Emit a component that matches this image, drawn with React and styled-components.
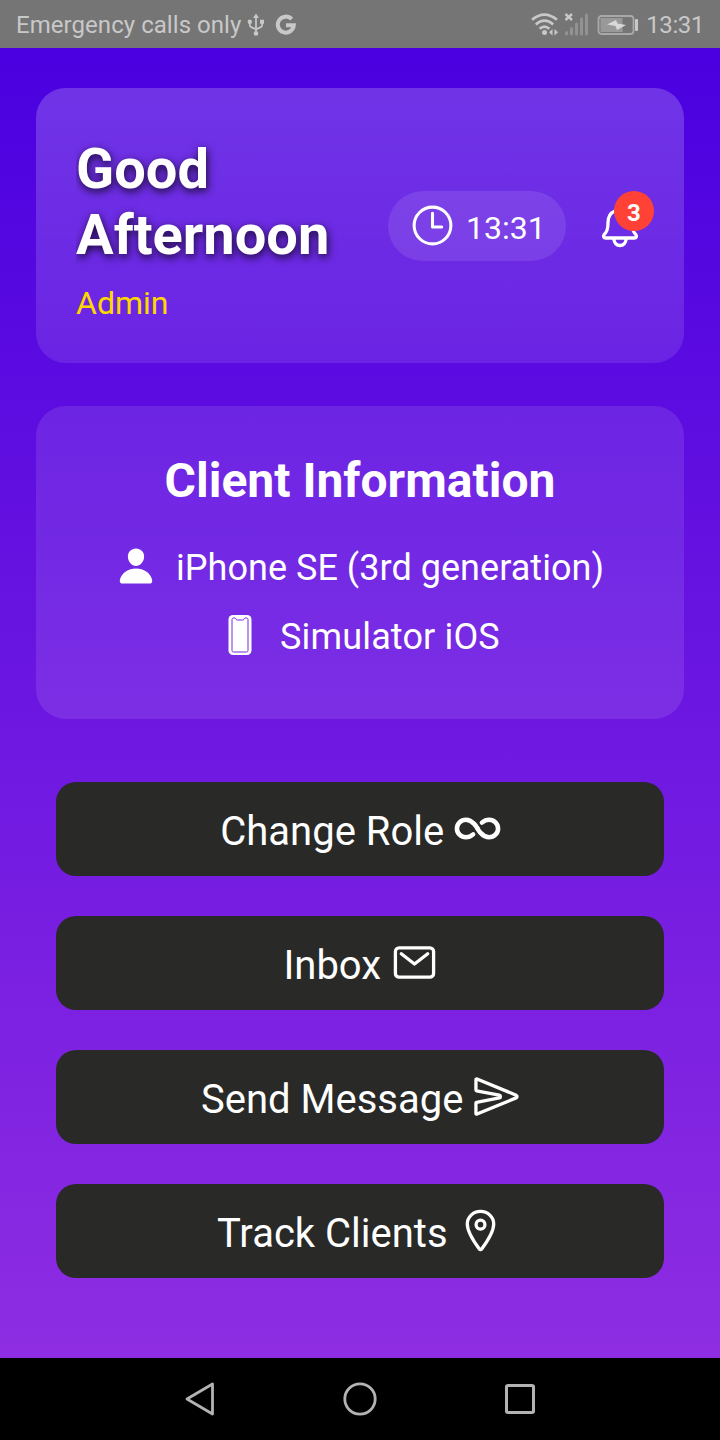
import React from "react";
import styled, { createGlobalStyle } from "styled-components";
import {
  IoTimeOutline,
  IoNotificationsOutline,
  IoPerson,
  IoMailOutline,
  IoSendOutline,
  IoLocationOutline,
} from "react-icons/io5";

const GlobalStyle = createGlobalStyle`
  * { box-sizing: border-box; }
  body {
    margin: 0;
    font-family: Roboto, "Liberation Sans", sans-serif;
    color: #fff;
  }
  svg { display: block; flex: none; }
`;

const Screen = styled.div`
  width: 720px;
  height: 1440px;
  display: flex;
  flex-direction: column;
  overflow: hidden;
`;

const StatusBar = styled.header`
  height: 48px;
  flex: none;
  padding: 2px 16px 0;
  display: flex;
  align-items: center;
  justify-content: space-between;
  background: #757575;
  color: #c8c8c8;
  font-size: 24px;
  white-space: nowrap;
`;

const StatusGroup = styled.div`
  display: flex;
  align-items: center;
  gap: ${(p) => p.$gap}px;
`;

const StatusText = styled.span`
  letter-spacing: ${(p) => p.$spacing}px;
`;

const Content = styled.main`
  flex: 1;
  padding: 40px 36px 0;
  display: flex;
  flex-direction: column;
  background: linear-gradient(#4a00e0, #8e2de2);
`;

const GreetingCard = styled.section`
  height: 275px;
  padding: 0 40px;
  display: flex;
  align-items: center;
  border-radius: 30px;
  background: linear-gradient(rgba(255, 255, 255, 0.2), rgba(255, 255, 255, 0.1));
`;

const Greeting = styled.div`
  width: 312px;
  flex: none;
  padding-top: 7px;
`;

const Title = styled.h1`
  margin: 0 0 16px;
  overflow: hidden;
  font-size: 56px;
  line-height: 66px;
  font-weight: 700;
  text-shadow: 1px 3px 9px rgba(0, 0, 0, 0.8);
`;

const Role = styled.div`
  font-size: 32px;
  line-height: 38px;
  color: #ffd700;
`;

const TimePill = styled.div`
  width: 178px;
  height: 70px;
  flex: none;
  padding-left: 20px;
  display: flex;
  align-items: center;
  gap: 9px;
  border-radius: 35px;
  background: rgba(255, 255, 255, 0.1);
  font-size: 32px;
  span { padding-top: 4px; }
`;

const BellButton = styled.div`
  position: relative;
  margin-left: 30px;
  svg * { stroke-width: 35px; }
`;

const Badge = styled.span`
  position: absolute;
  top: -11px;
  right: -10px;
  width: 40px;
  height: 40px;
  display: flex;
  align-items: center;
  justify-content: center;
  padding-top: 4px;
  border-radius: 50%;
  background: #ff4136;
  font-size: 24px;
  font-weight: 700;
`;

const ClientCard = styled.section`
  height: 313px;
  margin-top: 43px;
  padding-top: 47px;
  display: flex;
  flex-direction: column;
  align-items: center;
  border-radius: 30px;
  background: rgba(255, 255, 255, 0.1);
`;

const CardTitle = styled.h2`
  margin: 0 0 29px;
  font-size: 48px;
  line-height: 56px;
  font-weight: 700;
`;

const InfoRow = styled.div`
  height: 69px;
  display: flex;
  align-items: flex-start;
  gap: 20px;
  font-size: 36px;
  line-height: 60px;
  letter-spacing: ${(p) => p.$spacing}px;
  white-space: nowrap;
  svg { margin-top: 8px; }
`;

const Actions = styled.nav`
  margin-top: 63px;
  padding: 0 20px;
  display: flex;
  flex-direction: column;
  gap: 40px;
`;

const ActionButton = styled.button`
  height: 94px;
  padding: 4px 0 0 1px;
  display: flex;
  align-items: center;
  justify-content: center;
  gap: 9.5px;
  border: 0;
  border-radius: 20px;
  background: #292927;
  color: #fff;
  font: 400 40px Roboto, "Liberation Sans", sans-serif;
  svg { margin-top: -5px; }
  svg * { stroke-width: ${(p) => p.$stroke}px; }
`;

const NavBar = styled.footer`
  height: 82px;
  flex: none;
  display: flex;
  align-items: center;
  justify-content: center;
  gap: 124px;
  background: #000;
`;

const UsbIcon = () => (
  <svg width="18" height="24" viewBox="0 0 18 24" fill="none" stroke="currentColor" strokeWidth="1.7">
    <path d="M9 3v18M2.8 9v3.2c0 1 .5 1.5 1.4 1.9L9 16.2l4.8-2.1c.9-.4 1.4-.9 1.4-1.9V9" />
    <path d="M9 0.500l3 4.500H6zM13 6.700h4v4H13z" fill="currentColor" stroke="none" />
    <circle cx="2.800" cy="8.700" r="2.200" fill="currentColor" stroke="none" />
    <circle cx="9" cy="20.500" r="2.300" fill="currentColor" stroke="none" />
  </svg>
);

const GoogleIcon = () => (
  <svg width="22" height="22" viewBox="0 0 22 22" fill="none" stroke="currentColor" strokeWidth="4">
    <path d="M16.7 5.2A8 8 0 1 0 18.8 11.2H11" />
  </svg>
);

const WifiIcon = () => (
  <svg width="28" height="24" viewBox="0 0 28 24" fill="none" stroke="currentColor" strokeWidth="2.6">
    <path d="M1 6.8Q13.5-3.6 26 6.8M4.8 11.4Q13.5 4 22.2 11.4M8.6 15.8Q13.5 11.3 18.4 15.8" />
    <circle cx="13.5" cy="19.500" r="2.500" fill="currentColor" stroke="none" />
    <path d="M21.500 16v6.500l-3.500-3.200zM23.500 16v6.500l3.500-3.200z" fill="currentColor" stroke="none" />
  </svg>
);

const SignalIcon = () => (
  <svg width="24" height="24" viewBox="0 0 24 24">
    <path d="M1.500 1l6.500 6M8 1L1.500 7" stroke="currentColor" strokeWidth="2.400" />
    <path
      d="M2.500 19.500v1.500M7.500 15.500v5.500M12.500 11v10M17.500 6v15M22.500 2v19"
      stroke="#929292"
      strokeWidth="3"
      strokeLinecap="round"
    />
  </svg>
);

const BatteryIcon = () => (
  <svg width="42" height="20" viewBox="-1 0 42 20">
    <rect x="1.500" y="1" width="35" height="18" rx="3" fill="none" stroke="#a9a9a9" strokeWidth="1.800" />
    <rect x="3.500" y="3" width="22" height="14" fill="#999" />
    <path d="M10 9.500l9-4.500 1.500 3.500 8.500 1.500-9 5-1.500-4z" fill="#d8d8d8" />
    <rect x="38" y="4" width="3" height="12" rx="1" fill="#c8c8c8" />
  </svg>
);

const PhoneIcon = () => (
  <svg width="40" height="40" viewBox="0 0 40 40">
    <rect x="8.500" width="23" height="40" rx="4.500" fill="#fff" />
    <path
      d="M13.500 3H15c.8 0 .8 2 2.200 2h5.600c1.400 0 1.400-2 2.200-2h1.500c1 0 1.500.7 1.500 1.500v31c0 .8-.5 1.500-1.500 1.500h-13c-1 0-1.500-.7-1.500-1.500v-31c0-.8.5-1.500 1.500-1.500z"
      fill="none"
      stroke="#7629e3"
      strokeWidth="1"
    />
  </svg>
);

const InfinityIcon = ({ size }) => (
  <svg
    width={size}
    height={size}
    viewBox="0 0 512 512"
    fill="none"
    stroke="currentColor"
    strokeLinecap="round"
  >
    <path d="M256 256s-48-96-126-96c-54.120 0-98 43-98 96s43.880 96 98 96c30 0 56.450-13.180 78-32" />
    <path d="M256 256s48 96 126 96c54.120 0 98-43 98-96s-43.880-96-98-96c-29.370 0-56.660 13.750-78 32" />
  </svg>
);

const BackIcon = () => (
  <svg width="36" height="36" viewBox="0 0 36 36" fill="none" stroke="#b3b3b3" strokeWidth="2.800" strokeLinejoin="round">
    <path d="M30.500 3v30L5 18z" />
  </svg>
);

const HomeIcon = () => (
  <svg width="36" height="36" viewBox="0 0 36 36" fill="none" stroke="#b3b3b3" strokeWidth="2.800">
    <circle cx="18" cy="18" r="15.200" />
  </svg>
);

const RecentIcon = () => (
  <svg width="36" height="36" viewBox="0 0 36 36" fill="none" stroke="#b3b3b3" strokeWidth="3">
    <rect x="4.500" y="4.500" width="27" height="27" rx="1.500" />
  </svg>
);

const actions = [
  { label: "Change Role", Icon: InfinityIcon, stroke: 50 },
  { label: "Inbox", Icon: IoMailOutline, stroke: 36 },
  { label: "Send Message", Icon: IoSendOutline, stroke: 36 },
  { label: "Track Clients", Icon: IoLocationOutline, stroke: 36 },
];

export default function App() {
  return (
    <Screen>
      <GlobalStyle />
      <StatusBar>
        <StatusGroup $gap={10}>
          <StatusGroup $gap={6}>
            <StatusText $spacing={0.05}>Emergency calls only</StatusText>
            <UsbIcon />
          </StatusGroup>
          <GoogleIcon />
        </StatusGroup>
        <StatusGroup $gap={8}>
          <StatusGroup $gap={5}>
            <WifiIcon />
            <SignalIcon />
          </StatusGroup>
          <BatteryIcon />
          <StatusText $spacing={-0.4}>13:31</StatusText>
        </StatusGroup>
      </StatusBar>
      <Content>
        <GreetingCard>
          <Greeting>
            <Title>Good Afternoon</Title>
            <Role>Admin</Role>
          </Greeting>
          <TimePill>
            <IoTimeOutline size={49} />
            <span>13:31</span>
          </TimePill>
          <BellButton>
            <IoNotificationsOutline size={48} />
            <Badge>3</Badge>
          </BellButton>
        </GreetingCard>
        <ClientCard>
          <CardTitle>Client Information</CardTitle>
          <InfoRow $spacing={0.04}>
            <IoPerson size={40} />
            <span>iPhone SE (3rd generation)</span>
          </InfoRow>
          <InfoRow $spacing={0.15}>
            <PhoneIcon />
            <span>Simulator iOS</span>
          </InfoRow>
        </ClientCard>
        <Actions>
          {actions.map(({ label, Icon, stroke }) => (
            <ActionButton key={label} $stroke={stroke}>
              <span>{label}</span>
              <Icon size={47} />
            </ActionButton>
          ))}
        </Actions>
      </Content>
      <NavBar>
        <BackIcon />
        <HomeIcon />
        <RecentIcon />
      </NavBar>
    </Screen>
  );
}
